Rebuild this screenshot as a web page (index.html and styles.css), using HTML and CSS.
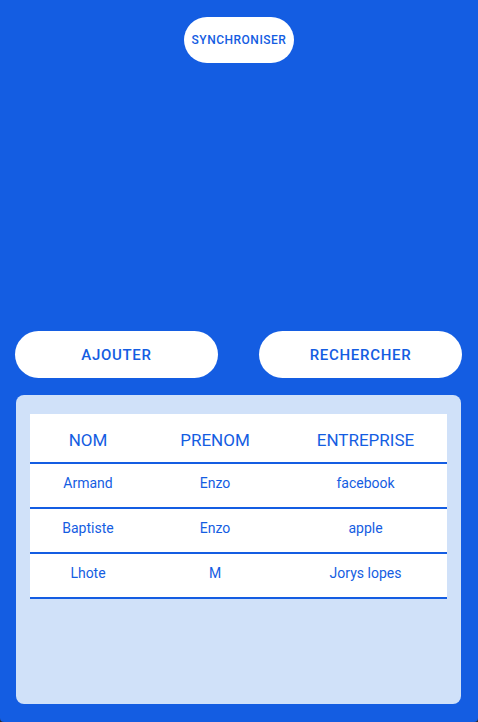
FILE: index.html
```html
<!DOCTYPE html>
<html lang="fr">
<head>
<meta charset="utf-8">
<title>Contacts</title>
<link rel="stylesheet" href="styles.css">
</head>
<body>
<div class="app">
  <div class="top">
    <button class="sync">SYNCHRONISER</button>
  </div>
  <div class="actions">
    <button class="action">AJOUTER</button>
    <button class="action">RECHERCHER</button>
  </div>
  <div class="panel">
    <table class="grid">
      <colgroup>
        <col class="c1"><col class="c2"><col class="c3">
      </colgroup>
      <thead>
        <tr><th>NOM</th><th>PRENOM</th><th>ENTREPRISE</th></tr>
      </thead>
      <tbody>
        <tr><td>Armand</td><td>Enzo</td><td>facebook</td></tr>
        <tr><td>Baptiste</td><td>Enzo</td><td>apple</td></tr>
        <tr><td>Lhote</td><td>M</td><td>Jorys lopes</td></tr>
      </tbody>
    </table>
  </div>
</div>
</body>
</html>
```
FILE: styles.css
```css
html {
  background: #2b2b2b;
}
body {
  margin: 0;
  font-family: Roboto, "Liberation Sans", sans-serif;
}
.app {
  width: 478px;
  height: 722px;
  background: #145de2;
  border-radius: 0 0 4px 4px;
  display: flex;
  flex-direction: column;
  box-sizing: border-box;
  padding: 17px 0 18px;
}
button {
  font-family: Roboto, "Liberation Sans", sans-serif;
  border: none;
  background: #ffffff;
  color: #145de2;
  cursor: pointer;
}
.top {
  display: flex;
  justify-content: center;
}
.sync {
  width: 110px;
  height: 46px;
  border-radius: 23px;
  font-size: 12px;
  font-weight: 500;
  letter-spacing: 0.5px;
  padding: 0;
}
.actions {
  display: flex;
  justify-content: space-between;
  padding: 0 16px 0 15px;
  margin-top: 268px;
}
.action {
  width: 203px;
  height: 47px;
  border-radius: 24px;
  font-size: 15px;
  font-weight: 500;
  letter-spacing: 0.7px;
  padding: 0;
}
.panel {
  margin: 17px 17px 0 16px;
  flex: 1;
  background: #d0e1f9;
  border-radius: 8px;
  padding: 19px 14px 0 14px;
}
.grid {
  width: 417px;
  border-collapse: collapse;
  background: #ffffff;
  color: #145de2;
  table-layout: fixed;
}
.c1 { width: 116px; }
.c2 { width: 138px; }
.c3 { width: 163px; }
.grid th {
  height: 49px;
  box-sizing: border-box;
  font-size: 17px;
  font-weight: 400;
  text-align: center;
  padding: 3px 0 0;
  border-bottom: 2px solid #145de2;
}
.grid td {
  height: 45px;
  box-sizing: border-box;
  font-size: 14px;
  text-align: center;
  padding: 0 0 6px;
  border-bottom: 2px solid #145de2;
}
```
